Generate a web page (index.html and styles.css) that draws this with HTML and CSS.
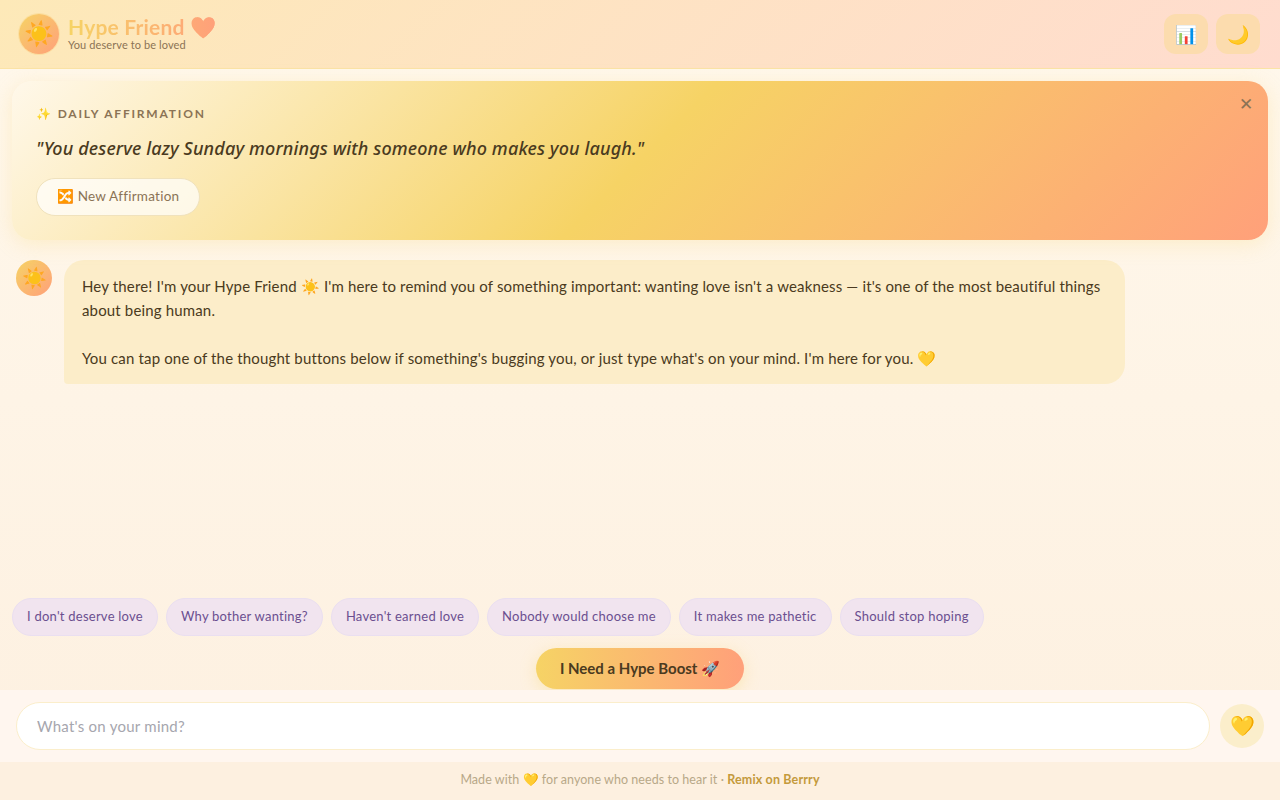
FILE: index.html
```html
<!DOCTYPE html>
<html lang="en">
<head>
    <meta charset="UTF-8">
    <meta name="viewport" content="width=device-width, initial-scale=1.0">
    <title>Hype Friend</title>
    <link rel="stylesheet" href="styles.css">
</head>
<body>
    <div class="header">
        <div class="brand">
            <div class="logo">☀️</div>
            <div class="brand-text">
                <h1><span class="brand-name">Hype Friend 🧡</span></h1>
                <p>You deserve to be loved</p>
            </div>
        </div>
        <div class="header-actions">
            <button class="icon-btn">📊</button>
            <button class="icon-btn">🌙</button>
        </div>
    </div>

    <div class="affirmation">
        <button class="close-btn">✕</button>
        <div class="aff-label"><span class="aff-spark">✨</span> DAILY AFFIRMATION</div>
        <div class="aff-text">"You deserve lazy Sunday mornings with someone who makes you laugh."</div>
        <button class="aff-btn">🔀 New Affirmation</button>
    </div>

    <div class="chat">
        <div class="message">
            <div class="avatar">☀️</div>
            <div class="bubble">Hey there! I'm your Hype Friend ☀️ I'm here to remind you of something important: wanting love isn't a weakness — it's one of the most beautiful things about being human.<br><br>You can tap one of the thought buttons below if something's bugging you, or just type what's on your mind. I'm here for you. 💛</div>
        </div>
    </div>

    <div class="chips">
        <button class="chip">I don't deserve love</button>
        <button class="chip">Why bother wanting?</button>
        <button class="chip">Haven't earned love</button>
        <button class="chip">Nobody would choose me</button>
        <button class="chip">It makes me pathetic</button>
        <button class="chip">Should stop hoping</button>
    </div>

    <div class="boost-row">
        <button class="boost">I Need a Hype Boost 🚀</button>
    </div>

    <div class="input-bar">
        <input class="msg-input" type="text" placeholder="What's on your mind?">
        <button class="send">💛</button>
    </div>

    <div class="footer">Made with 💛 for anyone who needs to hear it · <a href="#">Remix on Berrry</a></div>
</body>
</html>
```

FILE: styles.css
```css
* {
    box-sizing: border-box;
}
body {
    font-family: "Lato", "Noto Sans", sans-serif;
    margin: 0;
    height: 100vh;
    overflow: hidden;
    display: flex;
    flex-direction: column;
    background: linear-gradient(180deg, #fff8ec 0%, #fdf0e0 100%);
    color: #4a3a20;
}
button {
    font-family: inherit;
    cursor: pointer;
}
.header {
    height: 69px;
    flex: none;
    display: flex;
    align-items: center;
    justify-content: space-between;
    padding: 0 20px 0 19px;
    background: linear-gradient(135deg, #fde9b8 0%, #ffdccf 100%);
    border-bottom: 1px solid #fbe3a6;
}
.brand {
    display: flex;
    align-items: center;
    gap: 9px;
}
.logo {
    width: 40px;
    height: 40px;
    padding-bottom: 2px;
    border-radius: 50%;
    display: flex;
    align-items: center;
    justify-content: center;
    font-size: 24px;
    background: linear-gradient(135deg, #f6d365, #ffa07a);
    box-shadow: 0 0 0 1px #fbdfa0;
}
.brand-text {
    padding-bottom: 3px;
}
.brand-text h1 {
    margin: 0;
    font-size: 21px;
    line-height: 23px;
    font-weight: 700;
}
.brand-name {
    background: linear-gradient(90deg, #f6d365, #ffa07a);
    -webkit-background-clip: text;
    background-clip: text;
    color: transparent;
    letter-spacing: 0.2px;
}
.brand-text p {
    margin: 0;
    font-size: 11px;
    line-height: 13px;
    letter-spacing: 0.1px;
    color: #8b7355;
}
.header-actions {
    display: flex;
    gap: 8px;
}
.icon-btn {
    width: 44px;
    height: 40px;
    border: none;
    border-radius: 12px;
    font-size: 18px;
    padding: 0;
    background: #fcdcae;
}
.affirmation {
    position: relative;
    flex: none;
    height: 159px;
    margin: 12px 12px 0;
    padding: 24px;
    border-radius: 20px;
    background: linear-gradient(135deg, #fff8ea 0%, #f6d365 50%, #ffa07a 100%);
    box-shadow: 0 4px 20px rgba(246, 211, 101, 0.25);
}
.close-btn {
    position: absolute;
    top: 13px;
    right: 12px;
    width: 20px;
    height: 20px;
    padding: 0;
    border: none;
    background: none;
    color: #8b7355;
    font-size: 17px;
    line-height: 20px;
}
.aff-label {
    font-size: 12px;
    line-height: 18px;
    font-weight: 700;
    letter-spacing: 1.8px;
    color: #8b7355;
}
.aff-spark {
    letter-spacing: 0;
    margin-right: 2px;
}
.aff-text {
    margin-top: 12px;
    font-family: "Noto Sans", sans-serif;
    font-size: 18px;
    line-height: 26px;
    font-style: italic;
    font-weight: 500;
    letter-spacing: 0.13px;
    color: #4a3a20;
}
.aff-btn {
    margin-top: 17px;
    height: 38px;
    width: 164px;
    padding: 0 0 2px;
    border-radius: 19px;
    border: 1px solid #f0e2bd;
    background: rgba(255, 255, 255, 0.7);
    font-size: 13.5px;
    letter-spacing: 0.25px;
    color: #8b7355;
}
.chat {
    flex: 1;
    min-height: 0;
    padding: 20px 16px 0;
}
.message {
    display: flex;
    gap: 12px;
}
.avatar {
    width: 36px;
    height: 36px;
    padding-bottom: 2px;
    flex: none;
    border-radius: 50%;
    display: flex;
    align-items: center;
    justify-content: center;
    font-size: 20px;
    background: linear-gradient(135deg, #f6d365, #ffa07a);
}
.bubble {
    width: 1061px;
    height: 124px;
    padding: 14px 18px;
    border-radius: 20px 20px 20px 4px;
    background: #fcedc9;
    font-size: 15px;
    line-height: 24px;
    letter-spacing: 0.155px;
    color: #4a3a20;
}
.chips {
    flex: none;
    display: flex;
    gap: 8px;
    padding: 0 12px;
    height: 38px;
}
.chip {
    height: 38px;
    padding: 0 14px 2px;
    border-radius: 19px;
    border: 1px solid #eadff0;
    background: #f1e4ef;
    font-size: 13px;
    letter-spacing: 0.24px;
    color: #6b4f8f;
}
.boost-row {
    flex: none;
    display: flex;
    justify-content: center;
    padding-top: 12px;
    height: 54px;
}
.boost {
    width: 208px;
    height: 41px;
    padding: 0;
    border: none;
    border-radius: 21px;
    background: linear-gradient(90deg, #f6d365, #ffa07a);
    box-shadow: 0 4px 16px rgba(246, 211, 101, 0.35);
    font-size: 15px;
    font-weight: 700;
    color: #4a3a20;
}
.input-bar {
    flex: none;
    height: 72px;
    display: flex;
    align-items: center;
    gap: 10px;
    padding: 0 16px;
    background: #fff6ef;
}
.msg-input {
    flex: 1;
    height: 48px;
    padding: 0 20px;
    border: 1px solid #fbeecb;
    border-radius: 24px;
    background: #fff;
    font-family: inherit;
    font-size: 15px;
    letter-spacing: 0.25px;
    outline: none;
}
.msg-input::placeholder {
    color: #a6a6ae;
}
.send {
    width: 44px;
    height: 44px;
    padding: 0 0 2px;
    border: none;
    border-radius: 50%;
    background: #fbeecb;
    font-size: 20px;
}
.footer {
    flex: none;
    height: 38px;
    padding-bottom: 4px;
    display: flex;
    align-items: center;
    justify-content: center;
    white-space: pre-wrap;
    background: #fdf0e0;
    font-size: 12.5px;
    letter-spacing: 0.05px;
    color: #b8a888;
}
.footer a {
    color: #c49a3c;
    font-weight: 700;
    letter-spacing: 0.15px;
    text-decoration: none;
}
```
